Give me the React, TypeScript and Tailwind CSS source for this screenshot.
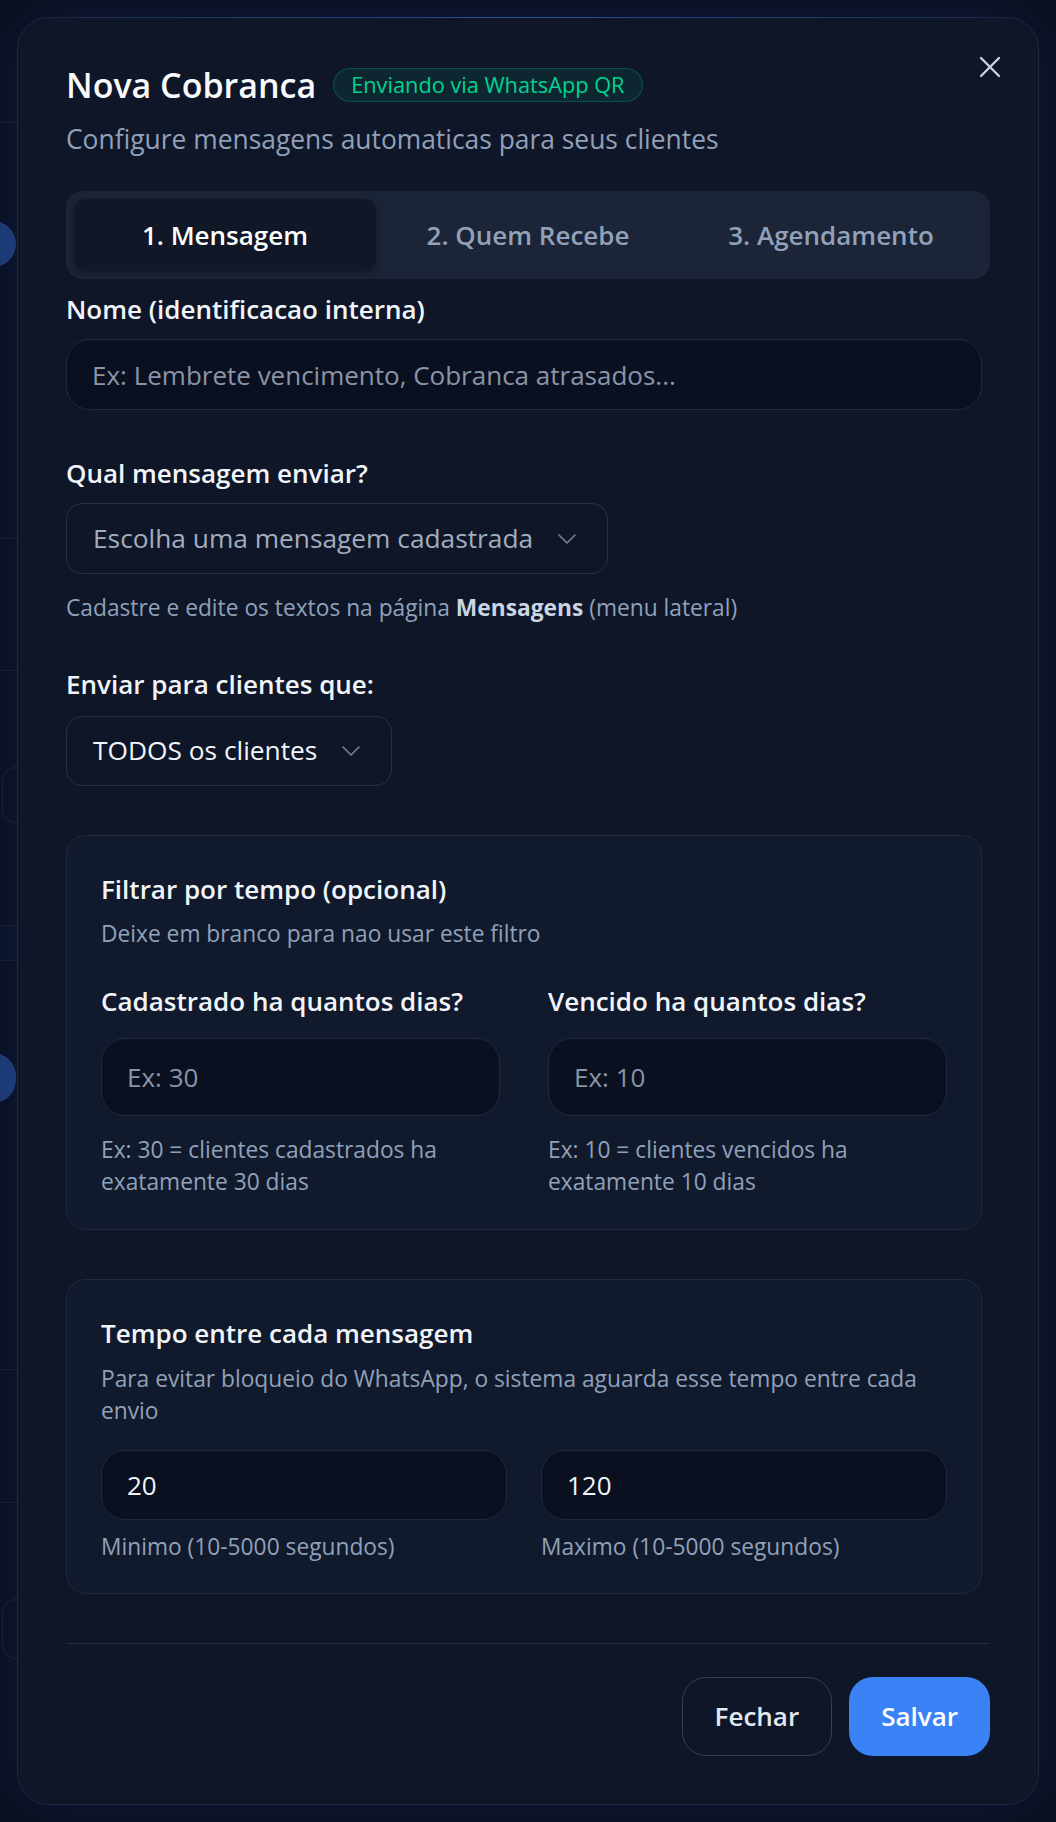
import { X } from "lucide-react";

const labelCls = "block text-[26px] leading-[36px] font-semibold text-slate-100";
const descCls = "text-[22.75px] leading-[32px] text-slate-400";
const inputCls =
    "block w-full rounded-[24px] border border-[#1f2a3d] bg-[#0a101f] px-[25px] text-[26px] text-slate-100 placeholder:text-[#8a94a7] outline-none";

function Chevron() {
    return (
        <svg width="18" height="10" viewBox="0 0 18 10" fill="none" className="shrink-0">
            <polyline points="1,1 9,9 17,1" stroke="#7d8799" strokeWidth="1.5" strokeLinecap="round" strokeLinejoin="round" />
        </svg>
    );
}

function SelectBox({ text, muted, className }: { text: string; muted?: boolean; className: string }) {
    return (
        <button
            type="button"
            className={`flex items-center gap-[25px] rounded-[16px] border border-[#263247] pl-[26px] pr-[31px] text-[26.3px] ${muted ? "text-[#a3adbd]" : "text-slate-100"} ${className}`}
        >
            <span>{text}</span>
            <Chevron />
        </button>
    );
}

// page that sits behind the dimmed overlay
function Backdrop() {
    return (
        <div className="pointer-events-none absolute inset-0">
            <div className="absolute left-0 top-[122px] h-px w-[17px] bg-[#161e2e]" />
            <div className="absolute -left-[30px] top-[221px] h-[46px] w-[46px] rounded-full bg-[#1d3c72]" />
            <div className="absolute left-0 top-[538px] h-px w-[17px] bg-[#151d2d]" />
            <div className="absolute left-0 top-[670px] h-px w-[17px] bg-[#151d2d]" />
            <div className="absolute left-[2px] top-[767px] h-[56px] w-[40px] rounded-[14px] border border-[#1a2333]" />
            <div className="absolute left-0 top-[925px] h-[36px] w-[17px] border-y border-[#151d2d] bg-[#0b1120]" />
            <div className="absolute -left-[30px] top-[1053px] h-[50px] w-[46px] rounded-full bg-[#1d3c72]" />
            <div className="absolute left-0 top-[1369px] h-px w-[17px] bg-[#151d2d]" />
            <div className="absolute left-0 top-[1502px] h-px w-[17px] bg-[#151d2d]" />
            <div className="absolute left-[2px] top-[1599px] h-[60px] w-[40px] rounded-[14px] border border-[#1a2333]" />
        </div>
    );
}

export default function App() {
    return (
        <div className="relative min-h-[1822px] overflow-hidden bg-[#0a0f1c] font-['Open_Sans',sans-serif]">
            <Backdrop />

            <div className="relative p-[17px]">
                <div className="relative rounded-[32px] border border-[#1d283b] bg-[#0f1628] px-12 pt-[47px] pb-[48px] shadow-[0_0_60px_rgba(30,64,175,0.25)]">
                    {/* top glow line */}
                    <div className="absolute inset-x-[20px] -top-px h-px bg-gradient-to-r from-transparent via-blue-500/50 to-transparent" />

                    <button type="button" className="absolute right-[30px] top-[31px] text-slate-300" title="Fechar">
                        <X size={36} strokeWidth={1.5} />
                    </button>

                    {/* Header */}
                    <div className="flex h-[40px] items-center gap-[17px]">
                        <h2 className="text-[34px] leading-[40px] font-semibold text-slate-50">Nova Cobranca</h2>
                        <span className="rounded-full border border-emerald-500/30 bg-emerald-500/10 px-[17px] text-[21.75px] leading-[32px] font-medium text-emerald-400">
                            Enviando via WhatsApp QR
                        </span>
                    </div>
                    <p className="mt-[16px] text-[26.4px] leading-[36px] text-slate-400">
                        Configure mensagens automaticas para seus clientes
                    </p>

                    {/* Tabs */}
                    <div className="mt-[34px] grid grid-cols-3 gap-px rounded-[16px] bg-[#1b2537] p-2">
                        <button type="button" className="h-[72px] rounded-[12px] bg-[#101827] text-[26px] font-semibold text-white shadow-[0_2px_8px_rgba(0,0,0,0.35)]">
                            1. Mensagem
                        </button>
                        <button type="button" className="h-[72px] rounded-[12px] text-[26px] font-semibold text-slate-400">
                            2. Quem Recebe
                        </button>
                        <button type="button" className="h-[72px] rounded-[12px] text-[26px] font-semibold text-slate-400">
                            3. Agendamento
                        </button>
                    </div>

                    {/* Form */}
                    <div className="pr-2">
                        <label className={`${labelCls} mt-[12px]`}>Nome (identificacao interna)</label>
                        <input
                            className={`${inputCls} mt-[12px] h-[71px]`}
                            placeholder="Ex: Lembrete vencimento, Cobranca atrasados..."
                        />

                        <label className={`${labelCls} mt-[45px]`}>Qual mensagem enviar?</label>
                        <SelectBox text="Escolha uma mensagem cadastrada" muted className="mt-[12px] h-[71px]" />
                        <p className={`${descCls} mt-[18px]`}>
                            Cadastre e edite os textos na página <strong className="font-bold text-slate-300">Mensagens</strong> (menu lateral)
                        </p>

                        <label className={`${labelCls} mt-[42px]`}>Enviar para clientes que:</label>
                        <SelectBox text="TODOS os clientes" className="mt-[14px] h-[70px]" />

                        {/* Filtro por tempo */}
                        <div className="mt-[49px] rounded-[20px] border border-[#1f2a3d] bg-[#111a2c] px-[34px] pt-[35px] pb-[31px]">
                            <h3 className={labelCls}>Filtrar por tempo (opcional)</h3>
                            <p className={`${descCls} mt-[11px]`}>Deixe em branco para nao usar este filtro</p>
                            <div className="mt-[33px] grid grid-cols-2 gap-x-12">
                                <div>
                                    <label className={labelCls}>Cadastrado ha quantos dias?</label>
                                    <input className={`${inputCls} mt-[19px] h-[78px]`} placeholder="Ex: 30" />
                                    <p className={`${descCls} mt-[18px]`}>Ex: 30 = clientes cadastrados ha exatamente 30 dias</p>
                                </div>
                                <div>
                                    <label className={labelCls}>Vencido ha quantos dias?</label>
                                    <input className={`${inputCls} mt-[19px] h-[78px]`} placeholder="Ex: 10" />
                                    <p className={`${descCls} mt-[18px]`}>Ex: 10 = clientes vencidos ha exatamente 10 dias</p>
                                </div>
                            </div>
                        </div>

                        {/* Intervalo */}
                        <div className="mt-[49px] rounded-[20px] border border-[#1f2a3d] bg-[#111a2c] px-[34px] pt-[35px] pb-[30px]">
                            <h3 className={labelCls}>Tempo entre cada mensagem</h3>
                            <p className={`${descCls} mt-[12px]`}>
                                Para evitar bloqueio do WhatsApp, o sistema aguarda esse tempo entre cada envio
                            </p>
                            <div className="mt-[23px] grid grid-cols-2 gap-x-[34px]">
                                <div>
                                    <input className={`${inputCls} h-[70px]`} defaultValue="20" />
                                    <p className={`${descCls} mt-[11px]`}>Minimo (10-5000 segundos)</p>
                                </div>
                                <div>
                                    <input className={`${inputCls} h-[70px]`} defaultValue="120" />
                                    <p className={`${descCls} mt-[11px]`}>Maximo (10-5000 segundos)</p>
                                </div>
                            </div>
                        </div>
                    </div>

                    {/* Footer */}
                    <div className="mt-[49px] flex justify-end gap-[17px] border-t border-[#1f2a3d] pt-[33px]">
                        <button type="button" className="h-[79px] rounded-[24px] border border-[#334155] px-8 text-[26px] font-semibold text-slate-200">
                            Fechar
                        </button>
                        <button type="button" className="h-[79px] rounded-[24px] bg-[#3b82f6] px-8 text-[26px] font-semibold text-white">
                            Salvar
                        </button>
                    </div>
                </div>
            </div>
        </div>
    );
}
